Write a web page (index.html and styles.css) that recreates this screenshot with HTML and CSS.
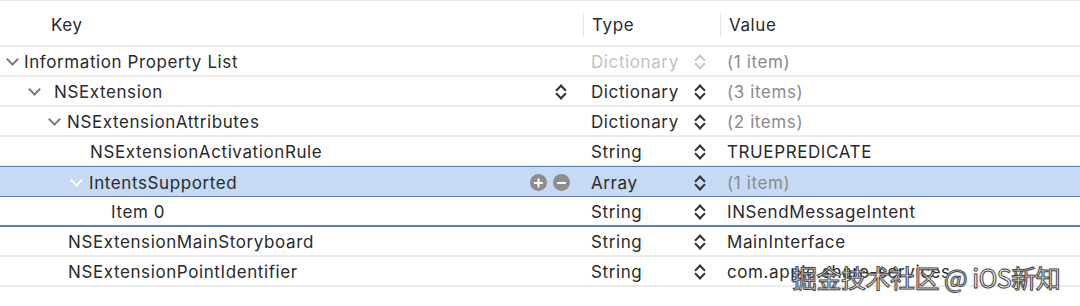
FILE: index.html
```html
<!DOCTYPE html>
<html lang="en">
<head>
    <meta charset="UTF-8">
    <title>Info.plist</title>
    <link rel="stylesheet" href="styles.css">
</head>
<body>
    <div class="plist">
        <div class="head">
            <div class="hcell key">Key</div>
            <div class="hcell type">Type</div>
            <div class="hcell value">Value</div>
        </div>

        <div class="row">
            <div class="cell key lvl0"><span class="chev"></span>Information Property List</div>
            <div class="cell type faded">Dictionary<span class="step faint"></span></div>
            <div class="cell value dim">(1 item)</div>
        </div>
        <div class="row">
            <div class="cell key lvl1"><span class="chev"></span><span class="grow">NSExtension</span><span class="step"></span></div>
            <div class="cell type">Dictionary<span class="step"></span></div>
            <div class="cell value dim">(3 items)</div>
        </div>
        <div class="row">
            <div class="cell key lvl2"><span class="chev"></span>NSExtensionAttributes</div>
            <div class="cell type">Dictionary<span class="step"></span></div>
            <div class="cell value dim">(2 items)</div>
        </div>
        <div class="row">
            <div class="cell key lvl3">NSExtensionActivationRule</div>
            <div class="cell type">String<span class="step"></span></div>
            <div class="cell value">TRUEPREDICATE</div>
        </div>
        <div class="row selected">
            <div class="cell key lvl3b"><span class="chev light"></span><span class="grow">IntentsSupported</span><span class="btn plus"></span><span class="btn minus"></span></div>
            <div class="cell type">Array<span class="step"></span></div>
            <div class="cell value dim">(1 item)</div>
        </div>
        <div class="row child-end">
            <div class="cell key lvl4">Item 0</div>
            <div class="cell type">String<span class="step"></span></div>
            <div class="cell value">INSendMessageIntent</div>
        </div>
        <div class="row">
            <div class="cell key lvl2t">NSExtensionMainStoryboard</div>
            <div class="cell type">String<span class="step"></span></div>
            <div class="cell value">MainInterface</div>
        </div>
        <div class="row">
            <div class="cell key lvl2t">NSExtensionPointIdentifier</div>
            <div class="cell type">String<span class="step"></span></div>
            <div class="cell value">com.apple.share-services</div>
        </div>
    </div>

    <div class="watermark">掘金技术社区 @ iOS新知</div>
</body>
</html>
```

FILE: styles.css
```css
body {
    margin: 0;
    background: white;
    font-family: Inter, "Liberation Sans", "Noto Sans CJK SC", sans-serif;
    font-size: 17px;
    letter-spacing: 0.6px;
    color: #2a2a2a;
    width: 1080px;
    height: 306px;
    overflow: hidden;
    position: relative;
}
.plist {
    border-top: 1px solid #e8e8e8;
}
.head {
    display: grid;
    grid-template-columns: 583px 137px 1fr;
    height: 44px;
    align-items: center;
    border-bottom: 2px solid #ececec;
}
.hcell {
    padding-left: 8px;
    margin-top: 4px;
    height: 24px;
    line-height: 24px;
    border-left: 1px solid #e4e4e4;
}
.hcell.key {
    padding-left: 51px;
    border-left: none;
}
.row {
    display: grid;
    grid-template-columns: 583px 137px 1fr;
    height: 28px;
    align-items: center;
    border-bottom: 2px solid #ececec;
}
.row.selected {
    background: #c6daf6;
    border-top: 1px solid #5b7fb8;
    border-bottom: 1px solid #5b7fb8;
    margin-top: -1px;
    height: 29px;
}
.row.child-end {
    border-bottom: 2px solid #5b7fb8;
}
.cell {
    display: flex;
    align-items: center;
    white-space: nowrap;
    padding-top: 2px;
}
.cell.type {
    padding-left: 8px;
}
.cell.type .step {
    margin-left: auto;
    margin-right: 14px;
}
.cell.value {
    padding-left: 7px;
}
.faded {
    color: #c2c2c2;
}
.dim {
    color: #8a8a8a;
}
.grow {
    flex: 1;
}
.lvl0 { padding-left: 5px; }
.lvl1 { padding-left: 27px; }
.lvl2 { padding-left: 47px; }
.lvl2t { padding-left: 68px; }
.lvl3 { padding-left: 90px; }
.lvl3b { padding-left: 69px; }
.lvl4 { padding-left: 111px; }
.lvl0 .chev { margin-right: 7px; }
.lvl1 .chev { margin-right: 15px; }
.lvl2 .chev { margin-right: 8px; }
.lvl3b .chev { margin-right: 8px; }
.lvl1 .step { margin-right: 16px; }

/* disclosure chevron */
.chev {
    width: 7px;
    height: 7px;
    border-right: 2px solid #7a7a7a;
    border-bottom: 2px solid #7a7a7a;
    transform: rotate(45deg);
    margin-left: 3px;
    margin-top: -5px;
    flex: none;
}
.chev.light {
    border-color: #ffffff;
}

/* up/down stepper */
.step {
    position: relative;
    width: 12px;
    height: 18px;
    flex: none;
}
.step::before,
.step::after {
    content: "";
    position: absolute;
    left: 2px;
    width: 6px;
    height: 6px;
    border-left: 2px solid #333;
    border-top: 2px solid #333;
}
.step::before {
    top: 3px;
    transform: rotate(45deg);
}
.step::after {
    bottom: 3px;
    transform: rotate(-135deg);
}
.step.faint::before,
.step.faint::after {
    border-color: #c8c8c8;
}

/* add / remove buttons */
.btn {
    position: relative;
    width: 17px;
    height: 17px;
    border-radius: 50%;
    background: #8d8d8d;
    flex: none;
    margin-right: 6px;
}
.btn.minus {
    margin-right: 13px;
}
.btn::before,
.btn::after {
    content: "";
    position: absolute;
    left: 4px;
    top: 7.5px;
    width: 9px;
    height: 2px;
    background: white;
}
.btn.plus::after {
    transform: rotate(90deg);
}
.btn.minus::after {
    display: none;
}

.watermark {
    position: absolute;
    left: 792px;
    top: 261px;
    font-family: "Noto Sans CJK SC", sans-serif;
    font-size: 25px;
    line-height: 32px;
    color: white;
    letter-spacing: -0.5px;
    -webkit-text-stroke: 1px #4a4a4a;
    text-shadow: 0 0 2px rgba(0,0,0,0.4);
}
```
